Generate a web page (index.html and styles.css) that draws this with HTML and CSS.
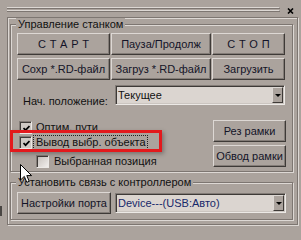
FILE: index.html
```html
<!DOCTYPE html>
<html lang="ru">
<head>
    <meta charset="UTF-8">
    <meta name="viewport" content="width=device-width, initial-scale=1.0">
    <title>Управление станком</title>
    <link rel="stylesheet" href="styles.css">
</head>
<body>
    <div class="titlebar">
        <div class="grip">
            <div class="grip-line"></div>
            <div class="grip-line"></div>
        </div>
        <svg class="close" width="7" height="6" viewBox="0 0 7 6">
            <path d="M1 0.5 L6 5.5 M6 0.5 L1 5.5" stroke="#000" stroke-width="1.6" />
        </svg>
    </div>

    <div class="panel">
        <div class="group group-main">
            <span class="group-title">Управление станком</span>

            <div class="btn-grid">
                <button class="btn btn-spaced">СТАРТ</button>
                <button class="btn">Пауза/Продолж</button>
                <button class="btn btn-spaced">СТОП</button>
                <button class="btn">Сохр *.RD-файл</button>
                <button class="btn">Загруз *.RD-файл</button>
                <button class="btn">Загрузить</button>
            </div>

            <div class="field-row">
                <span class="field-label">Нач. положение:</span>
                <div class="combo">
                    <span class="combo-text">Текущее</span>
                    <span class="combo-btn"><span class="arrow"></span></span>
                </div>
            </div>

            <div class="options">
                <div class="checks">
                    <label class="check-row">
                        <span class="checkbox checked">
                            <svg width="7" height="7" viewBox="0 0 7 7"><polyline points="0.5,3 2.6,5.2 6.5,1" fill="none" stroke="#000" stroke-width="1.7" /></svg>
                        </span>
                        <span class="check-text">Оптим. пути</span>
                    </label>
                    <label class="check-row">
                        <span class="checkbox checked">
                            <svg width="7" height="7" viewBox="0 0 7 7"><polyline points="0.5,3 2.6,5.2 6.5,1" fill="none" stroke="#000" stroke-width="1.7" /></svg>
                        </span>
                        <span class="check-text focused">Вывод выбр. объекта</span>
                    </label>
                    <label class="check-row sub">
                        <span class="checkbox"></span>
                        <span class="check-text">Выбранная позиция</span>
                    </label>
                </div>
                <div class="side-btns">
                    <button class="btn">Рез рамки</button>
                    <button class="btn">Обвод рамки</button>
                </div>
            </div>
        </div>

        <div class="group group-port">
            <span class="group-title">Установить связь с контроллером</span>
            <div class="port-row">
                <button class="btn btn-port">Настройки порта</button>
                <div class="combo combo-port">
                    <span class="combo-text">Device---(USB:Авто)</span>
                    <span class="combo-btn"><span class="arrow"></span></span>
                </div>
            </div>
        </div>
    </div>

    <!-- annotation + mouse pointer over the form -->
    <div class="highlight"></div>
    <svg class="cursor" width="13" height="20" viewBox="0 0 13 20">
        <path d="M0.5 0.5 L0.5 16 L4.3 12.4 L6.8 18.3 L9.2 17.3 L6.8 11.6 L11.6 11.6 Z" fill="#fff" stroke="#000" stroke-width="1" />
    </svg>
    <div class="edge-mark"></div>
</body>
</html>
```

FILE: styles.css
```css
html, body {
    margin: 0;
    padding: 0;
}
body {
    width: 301px;
    height: 240px;
    overflow: hidden;
    position: relative;
    background: #aba39d;
    font-family: "Liberation Sans", Arial, sans-serif;
    font-size: 11px;
    color: #111;
}

/* title bar with grip lines */
.titlebar {
    height: 17px;
    box-sizing: border-box;
    padding: 7px 0 0 7px;
    display: flex;
    align-items: flex-start;
}
.grip {
    width: 273px;
    display: flex;
    flex-direction: column;
    gap: 1px;
}
.grip-line {
    height: 0;
    border-top: 1px solid #ddd8d4;
    border-bottom: 1px solid #7d7671;
    border-right: 1px solid #7d7671;
}
.close {
    margin: 1px 0 0 7px;
}

/* etched frames */
.panel,
.group {
    box-sizing: border-box;
    border: 1px solid #7d7671;
    box-shadow: inset 1px 1px 0 #ddd8d4, 1px 1px 0 #ddd8d4;
}
.panel {
    width: 291px;
    height: 208px;
    margin-left: 7px;
    padding: 6px 0 0 2px;
}
.group {
    width: 283px;
    display: flex;
    flex-direction: column;
    padding: 0 6px;
}
.group-main {
    height: 148px;
}
.group-port {
    height: 38px;
    margin-top: 10px;
}
.group-title {
    align-self: flex-start;
    margin: -7px 0 0 -1px;
    padding: 0 2px;
    line-height: 13px;
    background: #aba39d;
}

/* buttons */
.btn {
    box-sizing: border-box;
    height: 22px;
    margin: 0;
    padding: 0;
    font-family: inherit;
    font-size: 11px;
    color: #141428;
    background: #aba39d;
    border: 1px solid;
    border-color: #ddd8d4 #3e3a37 #3e3a37 #ddd8d4;
    box-shadow: inset -1px -1px 0 #837c77;
}
.btn-spaced {
    letter-spacing: 4px;
    padding-left: 4px;
}
.btn-grid {
    margin-top: 2px;
    display: grid;
    grid-template-columns: 93px 100px 73px;
    column-gap: 1px;
    row-gap: 3px;
}

/* combo boxes */
.field-row {
    margin-top: 5px;
    display: flex;
    align-items: flex-start;
}
.field-label {
    margin: 10px 0 0 6px;
    line-height: 13px;
    width: 92px;
}
.combo {
    box-sizing: border-box;
    width: 170px;
    height: 20px;
    display: flex;
    align-items: stretch;
    background: #dbd5d0;
    border: 1px solid;
    border-color: #837c77 #ece9e6 #ece9e6 #837c77;
    box-shadow: inset 1px 1px 0 #3e3a37, inset -1px -1px 0 #cbc5c0;
    padding: 1px;
}
.combo-text {
    flex: 1;
    padding-left: 1px;
    line-height: 16px;
}
.combo-btn {
    box-sizing: border-box;
    width: 11px;
    display: flex;
    align-items: center;
    justify-content: center;
    background: #aba39d;
    border: 1px solid;
    border-color: #ddd8d4 #3e3a37 #3e3a37 #ddd8d4;
}
.arrow {
    width: 0;
    height: 0;
    border-left: 3px solid transparent;
    border-right: 3px solid transparent;
    border-top: 3px solid #000;
}

/* check boxes */
.options {
    margin-top: 12px;
    display: flex;
    justify-content: space-between;
}
.checks {
    display: flex;
    flex-direction: column;
}
.check-row {
    height: 15px;
    display: flex;
    align-items: center;
    padding-left: 2px;
}
.check-row.sub {
    margin-top: 4px;
    padding-left: 19px;
}
.checkbox {
    box-sizing: border-box;
    width: 13px;
    height: 13px;
    display: flex;
    align-items: center;
    justify-content: center;
    background: linear-gradient(135deg, #c4beb9, #f1eeec);
    border: 1px solid;
    border-color: #837c77 #ece9e6 #ece9e6 #837c77;
    box-shadow: inset 1px 1px 0 #3e3a37;
}
.checkbox.checked {
    background: #cfc9c4;
}
.checkbox svg {
    margin: 1px 0 0 1px;
}
.check-text {
    margin-left: 1px;
    padding: 0 1px 0 2px;
    line-height: 13px;
    border: 1px dotted transparent;
}
.sub .check-text {
    margin-left: 2px;
}
.check-text.focused {
    border-color: #222;
}
.side-btns {
    display: flex;
    flex-direction: column;
    gap: 3px;
}
.side-btns .btn {
    width: 73px;
}

/* port row */
.port-row {
    margin-top: 3px;
    display: flex;
    align-items: center;
    gap: 4px;
}
.btn-port {
    width: 94px;
}
.combo-port {
    width: 171px;
    color: #17286a;
}

/* overlays */
.highlight {
    position: absolute;
    left: 10px;
    top: 130px;
    width: 152px;
    height: 22px;
    box-sizing: border-box;
    border: 3px solid #e3191c;
    box-shadow: 2px 2px 4px rgba(40, 30, 30, 0.35);
}
.cursor {
    position: absolute;
    left: 20px;
    top: 164px;
}
.edge-mark {
    position: absolute;
    left: 0;
    top: 206px;
    width: 2px;
    height: 10px;
    background: #4a4643;
}
```
